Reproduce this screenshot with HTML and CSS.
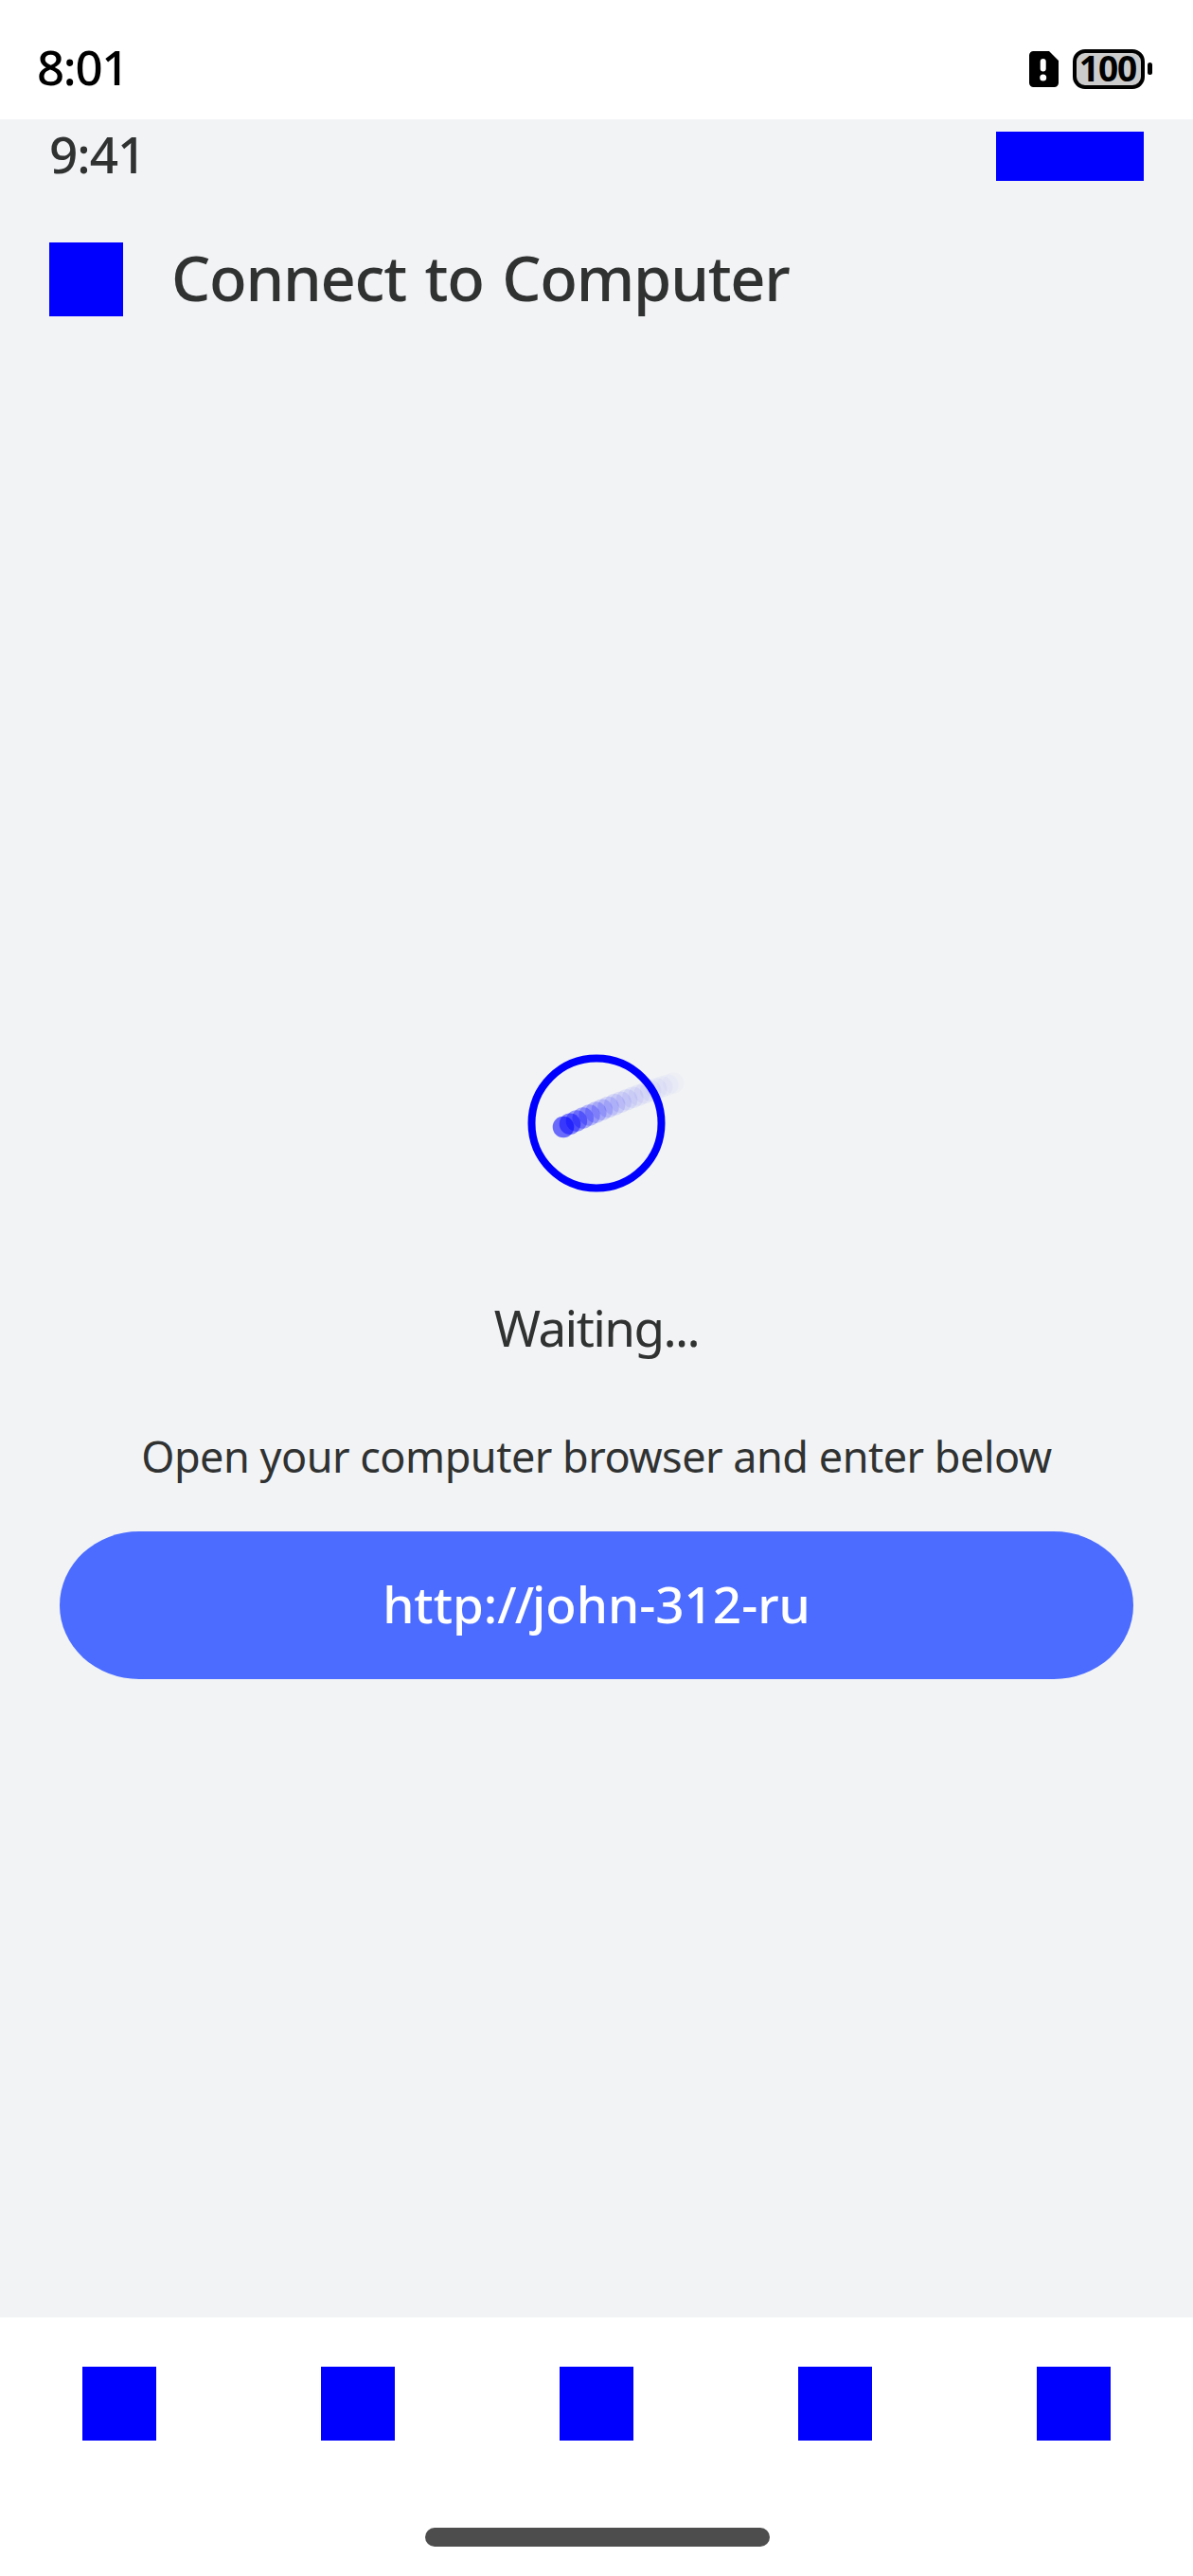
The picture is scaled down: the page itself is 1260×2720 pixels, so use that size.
FILE: index.html
```html
<!DOCTYPE html>
<html lang="en">
<head>
<meta charset="utf-8">
<title>Connect to Computer</title>
<link rel="stylesheet" href="styles.css">
</head>
<body>
<div class="system-bar">
  <span class="system-time">8:01</span>
  <div class="system-icons">
    <svg class="sim-icon" width="31" height="38" viewBox="0 0 31 38"><path d="M4.500 0H21L31 10V33.500A4.500 4.500 0 0 1 26.500 38H4.500A4.500 4.500 0 0 1 0 33.500V4.500A4.500 4.500 0 0 1 4.500 0Z"/><path d="M14.700 11V18.500" fill="none" stroke="#fff" stroke-width="6" stroke-linecap="round"/><circle cx="14.700" cy="28" r="3.500" fill="#fff"/></svg>
    <div class="battery"><span class="battery-level">100</span></div>
    <span class="battery-tip"></span>
  </div>
</div>
<main class="app">
  <div class="app-status"><span class="app-time">9:41</span><span class="app-signal"></span></div>
  <header class="app-header"><span class="square"></span><h1 class="title">Connect to Computer</h1></header>
  <section class="content">
    <svg class="spinner" width="190" height="150" viewBox="0 0 190 150">
      <circle cx="95" cy="75" r="68.500" fill="none" stroke="#00f" stroke-width="8"/>
      <g fill="#00f">
        <circle cx="176.300" cy="32.600" r="11.300" opacity=".015"/>
        <circle cx="170.300" cy="34.500" r="11.300" opacity=".02"/>
        <circle cx="164.300" cy="36.600" r="11.300" opacity=".025"/>
        <circle cx="158.300" cy="38.600" r="11.300" opacity=".03"/>
        <circle cx="152.100" cy="40.800" r="11.300" opacity=".035"/>
        <circle cx="145.900" cy="43.100" r="11.300" opacity=".04"/>
        <circle cx="139.700" cy="45.400" r="11.300" opacity=".045"/>
        <circle cx="133.400" cy="47.700" r="11.300" opacity=".055"/>
        <circle cx="127" cy="50.200" r="11.300" opacity=".065"/>
        <circle cx="120.600" cy="52.700" r="11.300" opacity=".08"/>
        <circle cx="114.100" cy="55.400" r="11.300" opacity=".1"/>
        <circle cx="107.500" cy="58" r="11.300" opacity=".12"/>
        <circle cx="100.900" cy="60.800" r="11.300" opacity=".15"/>
        <circle cx="94.300" cy="63.600" r="11.300" opacity=".19"/>
        <circle cx="87.500" cy="66.500" r="11.300" opacity=".23"/>
        <circle cx="80.700" cy="69.500" r="11.300" opacity=".29"/>
        <circle cx="73.900" cy="72.600" r="11.300" opacity=".37"/>
        <circle cx="67" cy="75.700" r="11.300" opacity=".47"/>
        <circle cx="60" cy="79" r="11.300" opacity=".56"/>
      </g>
    </svg>
    <p class="waiting">Waiting...</p>
    <p class="hint">Open your computer browser and enter below</p>
    <button class="address">http:<span class="slashes">//</span>john-312-ru</button>
  </section>
</main>
<nav class="tabs"><span class="square"></span><span class="square"></span><span class="square"></span><span class="square"></span><span class="square"></span></nav>
<div class="home"><span class="home-bar"></span></div>
</body>
</html>
```
FILE: styles.css
```css
* { box-sizing: border-box; margin: 0; padding: 0; }
body { width: 1260px; height: 2720px; display: flex; flex-direction: column; background: #fff; color: #303232; font-family: "Noto Sans", sans-serif; white-space: nowrap; overflow: hidden; }
.system-bar { height: 126px; padding: 19px 43px 0 39px; display: flex; align-items: center; justify-content: space-between; color: #000; }
.system-time { padding-bottom: 6px; font-size: 51px; font-weight: 500; letter-spacing: -1.3px; }
.system-icons { display: flex; align-items: center; }
.sim-icon { margin-right: 15px; }
.battery { width: 76px; height: 42px; border: 4px solid #000; border-radius: 13px; background: #ccc; display: flex; align-items: center; justify-content: center; }
.battery-level { padding: 0 2px 2px 0; font-size: 37px; line-height: 32px; font-weight: 700; letter-spacing: -1px; }
.battery-tip { width: 5px; height: 13px; margin-left: 3px; border-radius: 3px; background: #000; }
.app { height: 2321px; background: #f1f3f5; }
.app-status { height: 78px; padding: 0 52px; display: flex; align-items: center; justify-content: space-between; }
.app-time { padding-bottom: 4px; font-size: 53px; line-height: 74px; font-weight: 500; letter-spacing: -1px; }
.app-signal { width: 156px; height: 52px; background: #00f; }
.app-header { height: 182px; padding: 0 52px; display: flex; align-items: center; gap: 51px; }
.square { width: 78px; height: 78px; background: #00f; }
.title { padding-bottom: 5px; font-size: 65px; font-weight: 500; letter-spacing: -1.25px; word-spacing: 4px; }
.content { padding-top: 725px; display: flex; flex-direction: column; align-items: center; }
.spinner { display: block; }
.waiting { margin-top: 103px; font-size: 53px; line-height: 76px; letter-spacing: -1.6px; }
.hint { margin-top: 68px; font-size: 45px; line-height: 60px; letter-spacing: -0.5px; }
.address { margin-top: 49px; padding-bottom: 4px; width: 1134px; height: 156px; border: 0; border-radius: 84px / 78px; background: #4b6cff; color: #fff; font: 500 53px "Noto Sans", sans-serif; }
.slashes { letter-spacing: -2px; }
.tabs { height: 182px; display: flex; align-items: center; justify-content: space-around; }
.home { height: 91px; padding: 39.5px 0 0 1px; display: flex; justify-content: center; }
.home-bar { width: 364px; height: 20px; border-radius: 10px; background: #4d4d4d; }
```
